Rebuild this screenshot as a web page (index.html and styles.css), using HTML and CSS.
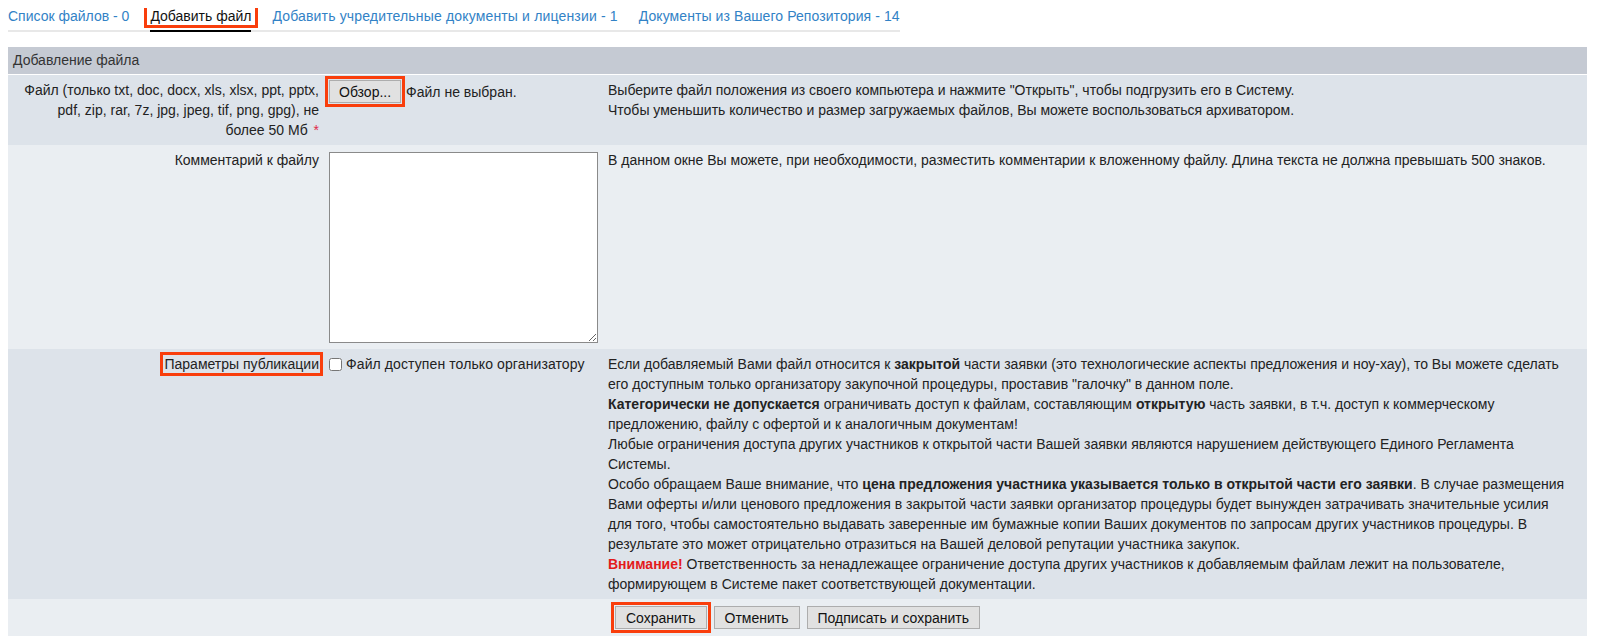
FILE: index.html
```html
<!DOCTYPE html>
<html lang="ru">
<head>
<meta charset="utf-8">
<title>Добавление файла</title>
<link rel="stylesheet" href="styles.css">
</head>
<body>
<nav class="tabs">
  <a class="tab" href="#">Список файлов - 0</a>
  <a class="tab active" href="#"><span class="mark-tab">Добавить файл</span></a>
  <a class="tab wide" href="#">Добавить учредительные документы и лицензии - 1</a>
  <a class="tab wide2" href="#">Документы из Вашего Репозитория - 14</a>
</nav>

<table class="form">
  <colgroup>
    <col class="c1">
    <col class="c2">
    <col>
  </colgroup>
  <thead>
    <tr><th colspan="3">Добавление файла</th></tr>
  </thead>
  <tbody>
    <tr class="row-a">
      <td class="lbl">Файл (только txt, doc, docx, xls, xlsx, ppt, pptx, pdf, zip, rar, 7z, jpg, jpeg, tif, png, gpg), не более 50 Мб <span class="req">*</span></td>
      <td class="inp">
        <div class="file">
          <button class="btn marked" type="button">Обзор...</button>
          <span>Файл не выбран.</span>
        </div>
      </td>
      <td class="desc">Выберите файл положения из своего компьютера и нажмите "Открыть", чтобы подгрузить его в Систему.<br>Чтобы уменьшить количество и размер загружаемых файлов, Вы можете воспользоваться архиватором.</td>
    </tr>
    <tr class="row-b">
      <td class="lbl">Комментарий к файлу</td>
      <td class="inp"><textarea class="comment"></textarea></td>
      <td class="desc">В данном окне Вы можете, при необходимости, разместить комментарии к вложенному файлу. Длина текста не должна превышать 500 знаков.</td>
    </tr>
    <tr class="row-a">
      <td class="lbl"><span class="marked">Параметры публикации</span></td>
      <td class="inp"><label class="chk"><input type="checkbox">Файл доступен только организатору</label></td>
      <td class="desc">Если добавляемый Вами файл относится к <b>закрытой</b> части заявки (это технологические аспекты предложения и ноу-хау), то Вы можете сделать его доступным только организатору закупочной процедуры, проставив "галочку" в данном поле.<br><b>Категорически не допускается</b> ограничивать доступ к файлам, составляющим <b>открытую</b> часть заявки, в т.ч. доступ к коммерческому предложению, файлу с офертой и к аналогичным документам!<br>Любые ограничения доступа других участников к открытой части Вашей заявки являются нарушением действующего Единого Регламента Системы.<br>Особо обращаем Ваше внимание, что <b>цена предложения участника указывается только в открытой части его заявки</b>. В случае размещения Вами оферты и/или ценового предложения в закрытой части заявки организатор процедуры будет вынужден затрачивать значительные усилия<br>для того, чтобы самостоятельно выдавать заверенные им бумажные копии Ваших документов по запросам других участников процедуры. В<br>результате это может отрицательно отразиться на Вашей деловой репутации участника закупок.<br><b class="warn">Внимание!</b> Ответственность за ненадлежащее ограничение доступа других участников к добавляемым файлам лежит на пользователе, формирующем в Системе пакет соответствующей документации.</td>
    </tr>
    <tr class="row-b">
      <td class="actions" colspan="3">
        <div class="btns">
          <button class="btn marked" type="button">Сохранить</button>
          <button class="btn" type="button">Отменить</button>
          <button class="btn" type="button">Подписать и сохранить</button>
        </div>
      </td>
    </tr>
  </tbody>
</table>
</body>
</html>
```

FILE: styles.css
```css
html, body {
  background: #fff;
}
body {
  margin: 8px;
  font-family: "Liberation Sans", Arial, sans-serif;
  font-size: 14px;
  color: #222;
}

.tabs {
  display: inline-flex;
  gap: 21px;
  border-bottom: 2px solid #e8e8e8;
}
.tab {
  display: block;
  line-height: 16px;
  padding-bottom: 6px;
  color: #3282c6;
  text-decoration: none;
}
.tab.wide {
  letter-spacing: 0.16px;
}
.tab.wide2 {
  letter-spacing: 0.08px;
}
.tab.active {
  color: #111;
  border-bottom: 2px solid #000;
  margin-bottom: -2px;
}
.mark-tab {
  position: relative;
}
.mark-tab::after {
  content: "";
  position: absolute;
  left: -6px;
  right: -7px;
  top: -7px;
  bottom: -4px;
  border: 3px solid #f93e0c;
}

.form {
  margin-top: 15px;
  width: calc(100% - 2px);
  border-collapse: collapse;
  table-layout: fixed;
}
.c1 { width: 316px; }
.c2 { width: 280px; }

.form th {
  background: #c5cad3;
  color: #333;
  font-weight: normal;
  text-align: left;
  height: 27px;
  line-height: 27px;
  padding: 0 5px;
  border-bottom: 1px solid #fff;
}
.form td {
  padding: 5px;
  line-height: 20px;
  vertical-align: top;
}
.row-a td { background: #dde3ea; }
.row-b td { background: #eaeef2; }

.lbl {
  text-align: right;
}
.form td.lbl {
  padding-left: 15px;
}
.form td.desc {
  padding-left: 4px;
  padding-right: 9px;
}
.req {
  color: #e0284a;
  margin-left: 2px;
}

.marked {
  outline: 3px solid #f93e0c;
  outline-offset: 1px;
}

.btn {
  font-family: "Liberation Sans", Arial, sans-serif;
  font-size: 14px;
  color: #111;
  background: #e1e1e1;
  border: 1px solid #adadad;
  border-radius: 0;
  height: 23px;
  padding: 0 10px;
  margin: 0;
}

.file {
  display: flex;
  align-items: center;
  gap: 5px;
}
.file .btn {
  padding: 0 9px;
}

.comment {
  display: block;
  box-sizing: border-box;
  width: 269px;
  height: 191px;
  margin: 2px 0 1px;
  border: 1px solid #8a8a8a;
  background: #fff;
  resize: both;
}

.chk {
  display: flex;
  align-items: center;
  gap: 4px;
  letter-spacing: 0.1px;
}
.chk input {
  margin: 0;
  width: 13px;
  height: 13px;
}

.warn {
  color: #e31b1b;
}

.form td.actions {
  padding: 7px 5px;
}
.btns {
  display: flex;
  justify-content: center;
  gap: 7px;
}
```
